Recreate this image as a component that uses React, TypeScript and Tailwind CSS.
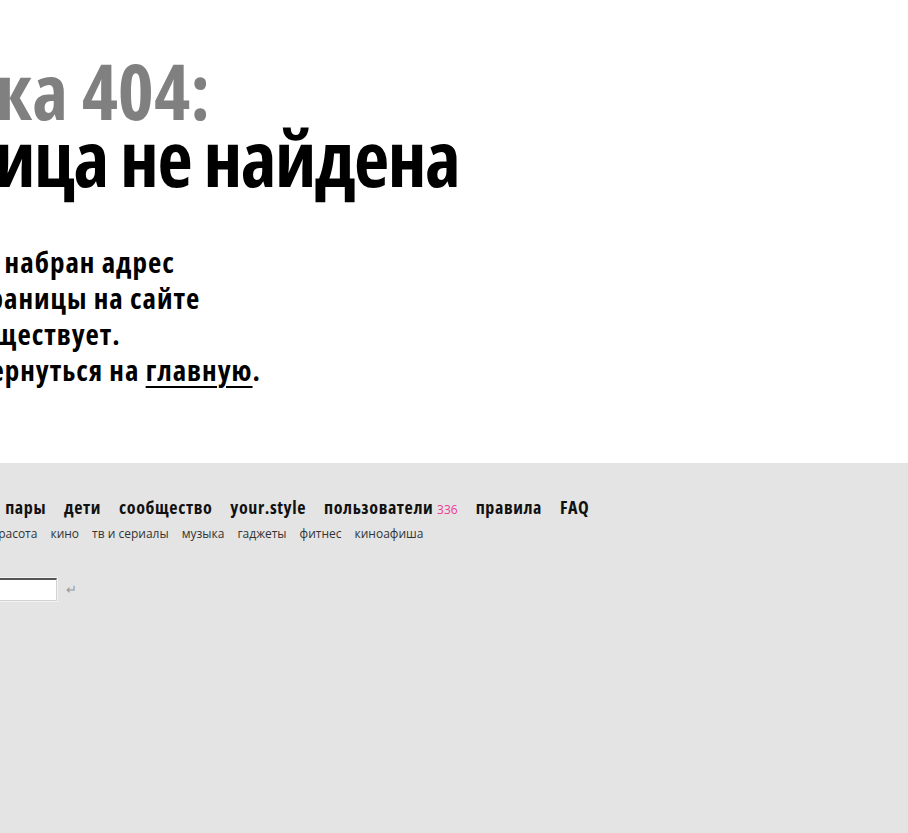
import React from "react";

const font = { fontFamily: '"Open Sans", "Noto Sans", sans-serif' };

export default function App() {
  const nav = ["звезды", "мода", "отношения", "пары", "дети", "сообщество", "your.style"];
  const sub = ["звезды", "мода", "красота", "кино", "тв и сериалы", "музыка", "гаджеты", "фитнес", "киноафиша"];
  return (
    <div className="w-[908px] min-h-[833px] overflow-hidden bg-white" style={font}>
      <div className="h-[463px] pt-[57px]">
        <h1 className="ml-[-186px] text-[77px] leading-[67px] font-bold font-stretch-[75%] text-[#808080] whitespace-nowrap">
          Ошибка 404:
        </h1>
        <h2 className="ml-[-179px] text-[77px] leading-[67px] font-bold font-stretch-[75%] tracking-[-1.5px] text-black whitespace-nowrap">
          Страница не найдена
        </h2>
        <p className="ml-[-171px] mt-[53px] text-[29px] leading-[36px] font-bold font-stretch-[75%] tracking-[1px] text-black whitespace-nowrap">
          Неправильно набран адрес
          <br />
          или такой страницы на сайте
          <br />
          больше не существует.
          <br />
          Вы можете вернуться на{" "}
          <a href="#" className="underline decoration-2 underline-offset-[5px]">
            главную
          </a>
          .
        </p>
      </div>
      <div className="bg-[#e4e4e4] min-h-[370px] pt-[31px]">
        <ul className="ml-[-234px] flex items-baseline gap-[18px] text-[18px] font-bold font-stretch-[75%] tracking-[0.6px] text-[#111] whitespace-nowrap">
          {nav.map((n) => (
            <li key={n}>{n}</li>
          ))}
          <li>
            пользователи{" "}
            <span className="text-[12px] font-normal font-stretch-[100%] tracking-normal text-[#ee3a94]">336</span>
          </li>
          <li>правила</li>
          <li>FAQ</li>
        </ul>
        <ul className="ml-[-105px] mt-[4px] flex gap-[13px] text-[12px] text-[#333] whitespace-nowrap">
          {sub.map((n) => (
            <li key={n}>{n}</li>
          ))}
        </ul>
        <div className="mt-[35px] flex items-center gap-[9px] ml-[-100px]">
          <input
            className="w-[157px] h-[23px] bg-white border border-[#d2d2d2] border-t-2 border-t-[#555] outline-none shadow-[0_0_0_1px_#f2f2f2]"
            type="text"
          />
          <span className="text-[13px] leading-none text-[#999]">↵</span>
        </div>
      </div>
    </div>
  );
}
